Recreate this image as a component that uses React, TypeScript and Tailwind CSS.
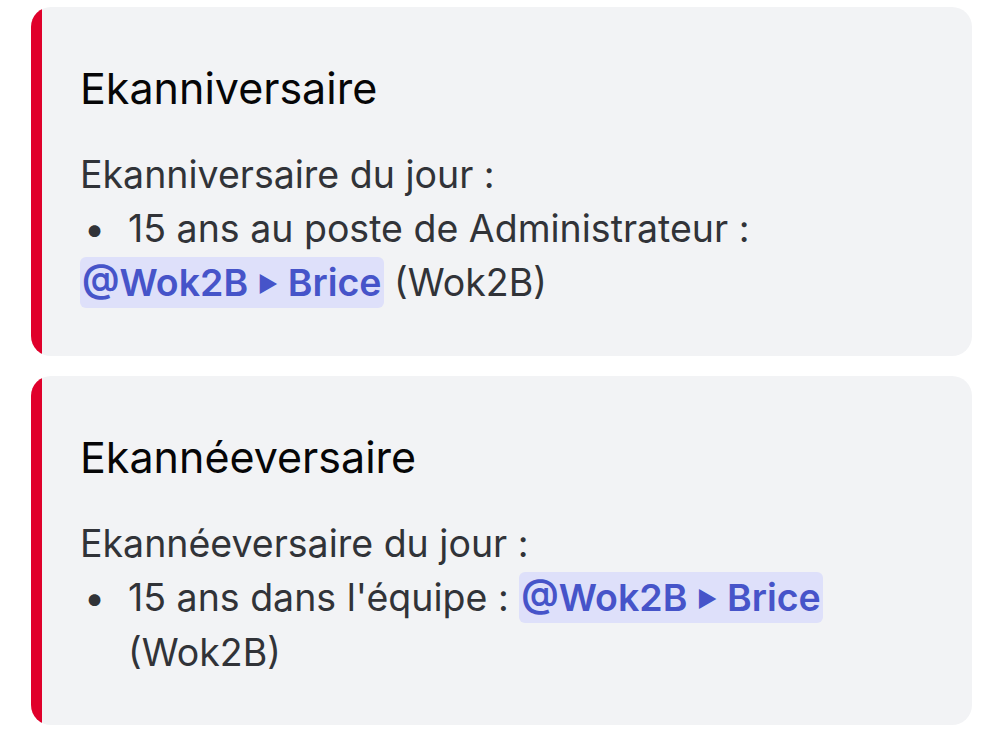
import React from 'react';

const Mention: React.FC<{ children: React.ReactNode }> = ({ children }) => (
  <span className="rounded-md bg-[#dee0fa] px-[2px] py-[3px] font-semibold text-[#4654c9]">{children}</span>
);

const Card: React.FC<{ title: string; children: React.ReactNode }> = ({ title, children }) => (
  <div className="flex overflow-hidden rounded-[20px] bg-[#f2f3f5]">
    <div className="w-[11px] shrink-0 bg-[#e0002b]" />
    <div className="flex-1 pl-[38px] pr-[30px] pt-[55px] pb-[45px]">
      <h2 className="text-[43px] leading-[53px] font-normal text-[#060607]">{title}</h2>
      <div className="mt-[33px] text-[37.5px] leading-[54px] text-[#313338]">{children}</div>
    </div>
  </div>
);

export default function App() {
  return (
    <div
      className="min-h-screen bg-white pl-[31px] pr-[36px] pt-[7px] flex flex-col gap-[20px]"
      style={{ fontFamily: 'Inter, "Noto Sans", sans-serif' }}
    >
      <Card title="Ekanniversaire">
        <div>Ekanniversaire du jour :</div>
        <div className="flex">
          <span className="w-[48px] shrink-0 pl-[4px]">•</span>
          <span>15 ans au poste de Administrateur :</span>
        </div>
        <div>
          <Mention>
            @Wok2B <span className="text-[22px] align-[4px]">▶</span> Brice
          </Mention>{' '}
          (Wok2B)
        </div>
      </Card>
      <Card title="Ekannéeversaire">
        <div>Ekannéeversaire du jour :</div>
        <div className="flex">
          <span className="w-[48px] shrink-0 pl-[4px]">•</span>
          <span>
            15 ans dans l'équipe :{' '}
            <Mention>
              @Wok2B <span className="text-[22px] align-[4px]">▶</span> Brice
            </Mention>
            <br />
            (Wok2B)
          </span>
        </div>
      </Card>
    </div>
  );
}
